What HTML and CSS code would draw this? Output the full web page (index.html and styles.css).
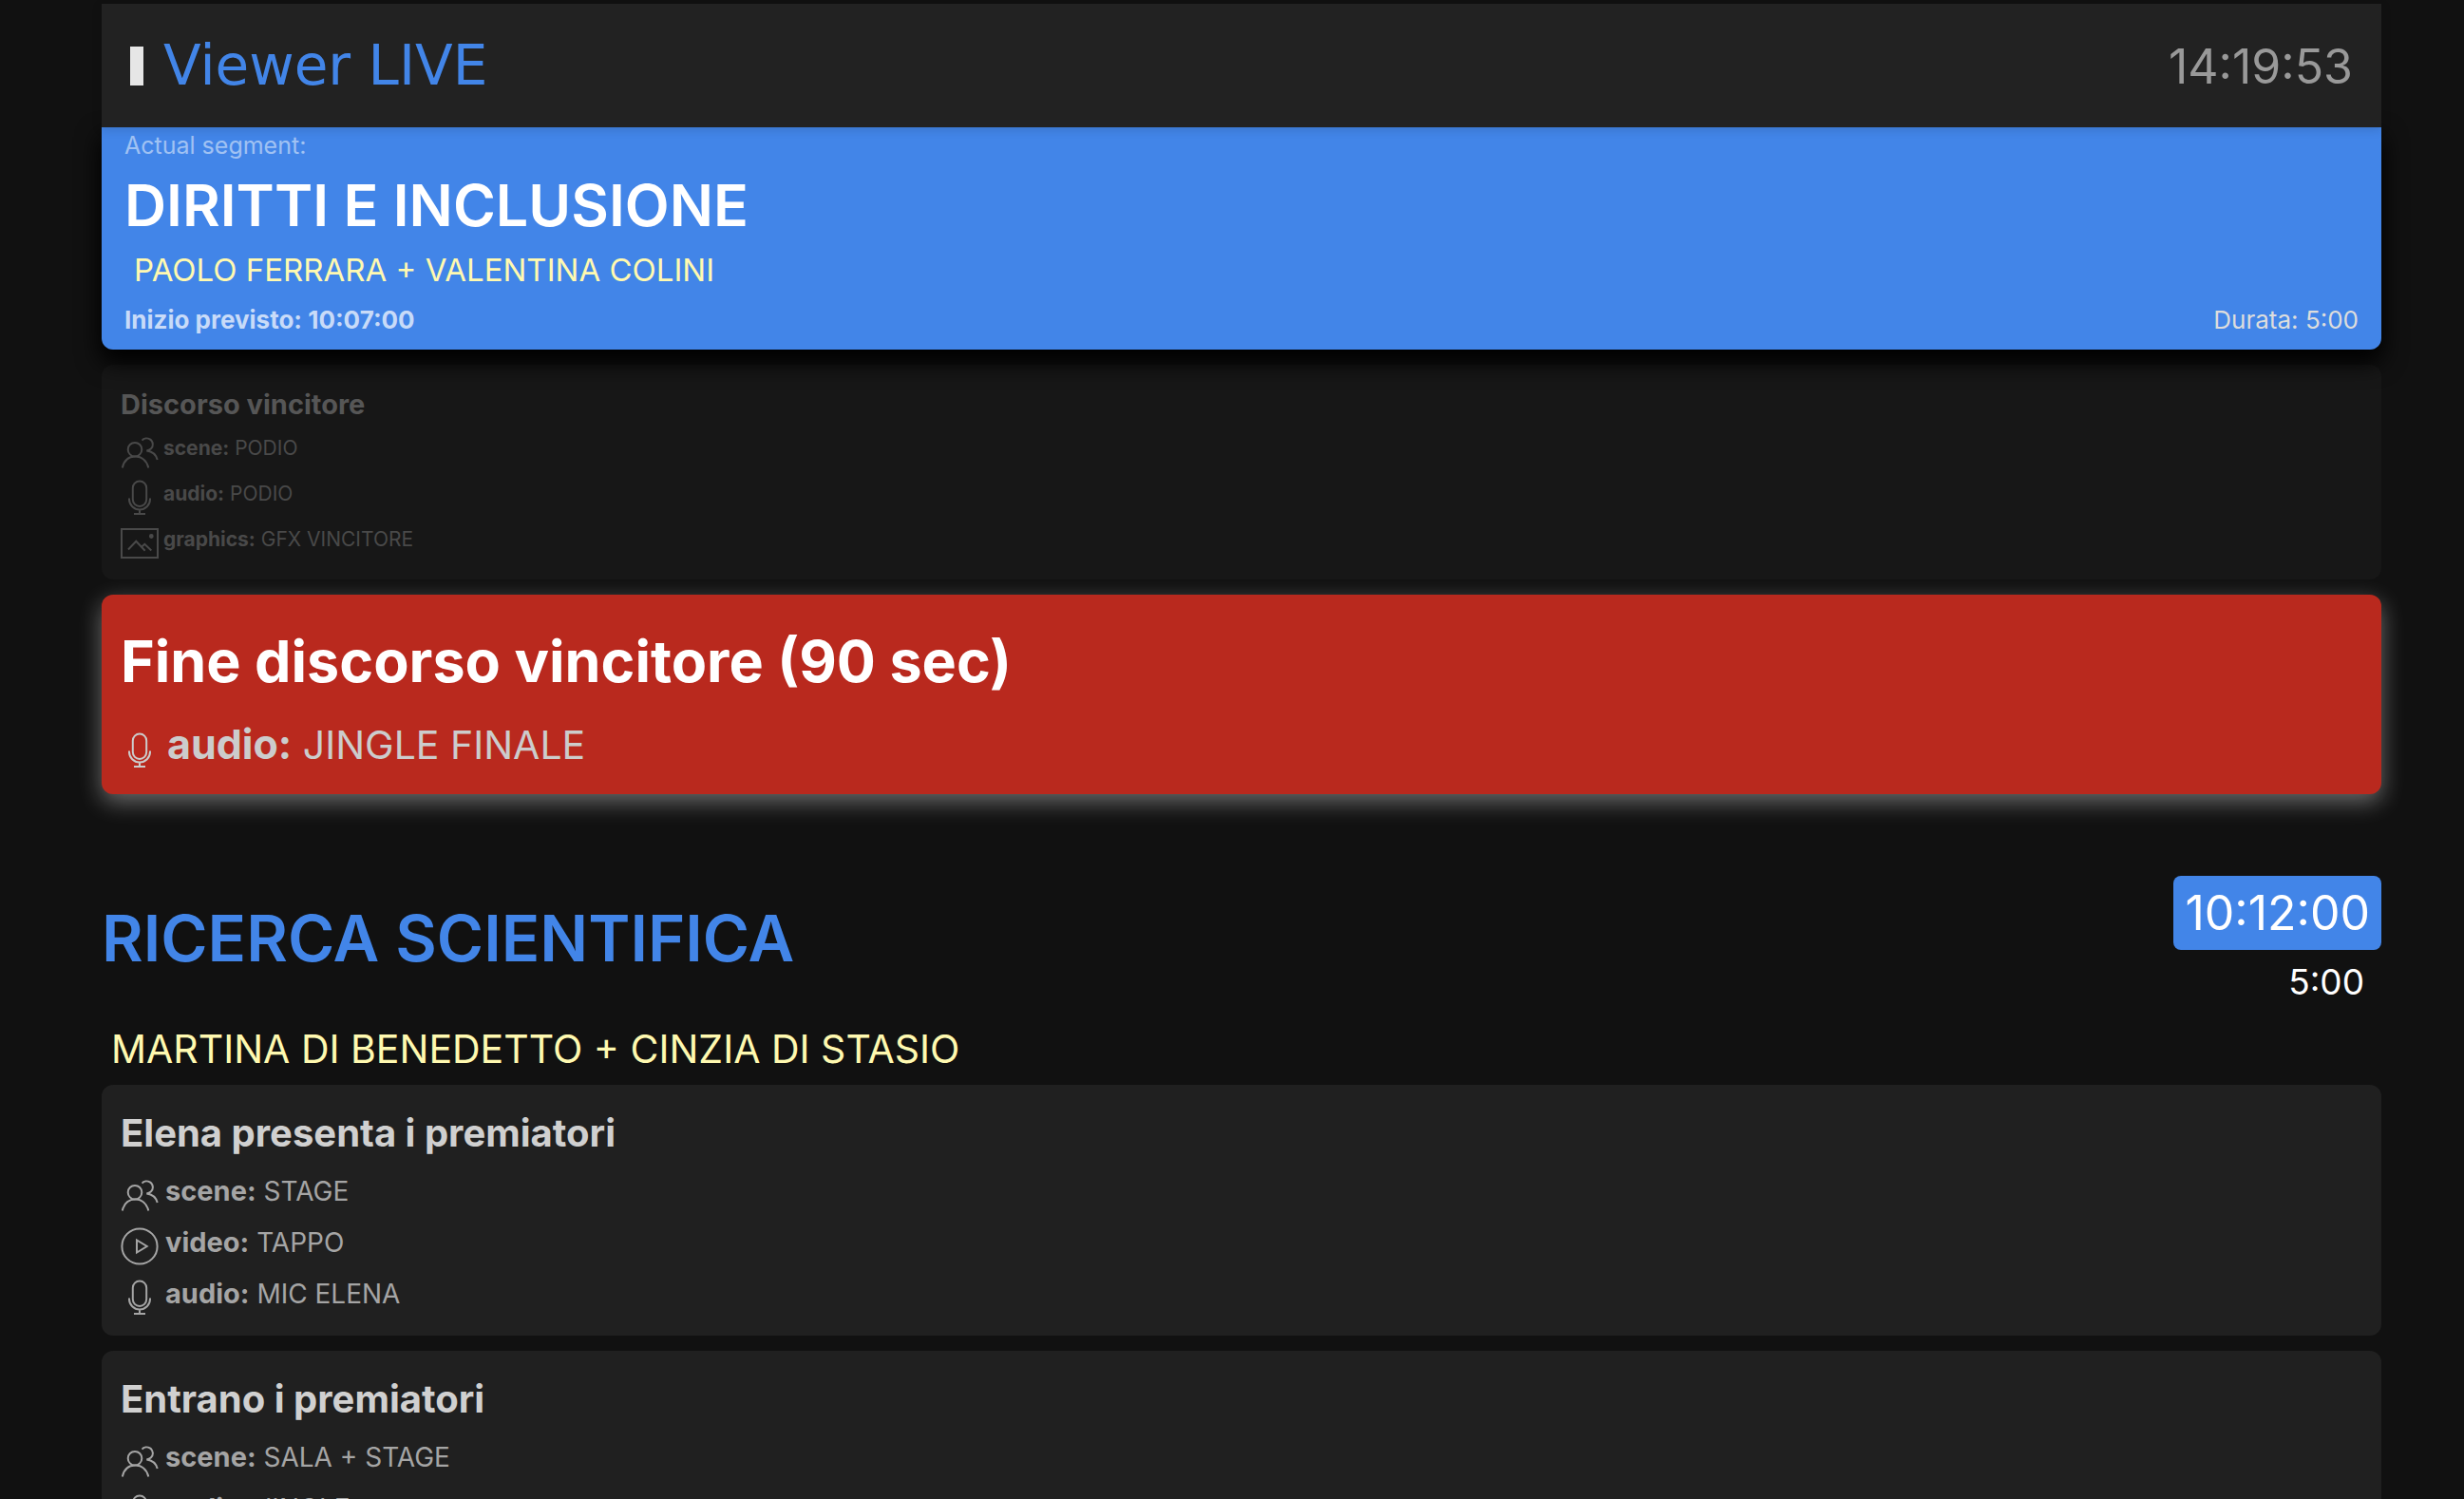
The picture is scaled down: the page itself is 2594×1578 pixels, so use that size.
FILE: index.html
```html
<!DOCTYPE html>
<html lang="it">
<head>
<meta charset="utf-8">
<title>Viewer LIVE</title>
<link rel="stylesheet" href="styles.css">
</head>
<body>
<svg class="sprite" aria-hidden="true">
  <symbol id="scene" viewBox="0 0 40 40">
    <circle cx="15" cy="17.2" r="7.3"/>
    <path d="M1.8 36.5C3.5 29 8.500 24.500 15.400 24.500S27.500 29 29.300 36.500M22.500 7.600C24.500 5.200 28 4.800 30.800 6.400C34.600 8.700 34.800 14 31.800 16.600C30.600 17.700 29.200 18.200 27.300 18.400C33 19 37.300 22.500 38.700 28"/>
  </symbol>
  <symbol id="video" viewBox="0 0 40 40">
    <circle cx="20" cy="20" r="18.6"/>
    <path d="M17 13.500V26.500L27.700 20Z"/>
  </symbol>
  <symbol id="audio" viewBox="0 0 40 40">
    <rect x="12.800" y="2.500" width="14.400" height="26.500" rx="7.200"/>
    <path d="M9 20.500V21.500A11 11 0 0 0 31 21.500V20.500M20 32.500V37M14 37H26"/>
  </symbol>
  <symbol id="graphics" viewBox="0 0 40 40">
    <rect x="1" y="5" width="38" height="30"/>
    <path d="M8 26.500L16.300 17.800L25.700 27.700M22.300 23.600L25.300 20.800L32.300 27.500"/>
    <circle class="dot" cx="32.300" cy="12.500" r="1.400"/>
  </symbol>
</svg>

<div class="viewer">
  <header class="topbar">
    <h1 class="brand">Viewer LIVE</h1>
    <time class="clock">14:19:53</time>
  </header>

  <section class="current">
    <p class="current-label">Actual segment:</p>
    <h2 class="current-title">DIRITTI E INCLUSIONE</h2>
    <p class="current-people">PAOLO FERRARA + VALENTINA COLINI</p>
    <div class="current-foot">
      <strong class="current-start">Inizio previsto: 10:07:00</strong>
      <span>Durata: 5:00</span>
    </div>
  </section>

  <main>
    <article class="card card-past">
      <h3 class="card-title">Discorso vincitore</h3>
      <ul class="cues">
        <li class="cue"><svg class="icon"><use href="#scene"/></svg><span><b>scene:</b> PODIO</span></li>
        <li class="cue"><svg class="icon"><use href="#audio"/></svg><span><b>audio:</b> PODIO</span></li>
        <li class="cue"><svg class="icon"><use href="#graphics"/></svg><span><b>graphics:</b> GFX VINCITORE</span></li>
      </ul>
    </article>

    <article class="card card-live">
      <h3 class="card-title">Fine discorso vincitore (90 sec)</h3>
      <ul class="cues">
        <li class="cue"><svg class="icon"><use href="#audio"/></svg><span><b>audio:</b> JINGLE FINALE</span></li>
      </ul>
    </article>

    <section class="segment">
      <header class="segment-head">
        <h2 class="segment-title">RICERCA SCIENTIFICA</h2>
        <div class="segment-times">
          <time class="segment-start">10:12:00</time>
          <span class="segment-length">5:00</span>
        </div>
      </header>
      <p class="segment-people">MARTINA DI BENEDETTO + CINZIA DI STASIO</p>

      <article class="card">
        <h3 class="card-title">Elena presenta i premiatori</h3>
        <ul class="cues">
          <li class="cue"><svg class="icon"><use href="#scene"/></svg><span><b>scene:</b> STAGE</span></li>
          <li class="cue"><svg class="icon"><use href="#video"/></svg><span><b>video:</b> TAPPO</span></li>
          <li class="cue"><svg class="icon"><use href="#audio"/></svg><span><b>audio:</b> MIC ELENA</span></li>
        </ul>
      </article>

      <article class="card">
        <h3 class="card-title">Entrano i premiatori</h3>
        <ul class="cues">
          <li class="cue"><svg class="icon"><use href="#scene"/></svg><span><b>scene:</b> SALA + STAGE</span></li>
          <li class="cue"><svg class="icon"><use href="#audio"/></svg><span><b>audio:</b> JINGLE</span></li>
        </ul>
      </article>
    </section>
  </main>
</div>
</body>
</html>
```

FILE: styles.css
```css
* {
  box-sizing: border-box;
  margin: 0;
  padding: 0;
}

html {
  scrollbar-width: none;
}

body {
  padding-left: 20px;
  background: #111;
  color: #fff;
  font-family: "Inter", sans-serif;
}

.sprite {
  display: none;
}

.viewer {
  max-width: 2400px;
  margin: 0 auto;
  padding-top: 4px;
}

/* Header bar */
.topbar {
  position: sticky;
  top: 0;
  z-index: 3;
  display: flex;
  align-items: center;
  justify-content: space-between;
  height: 130px;
  padding: 0 30px;
  background: #222;
  box-shadow: 0 2px 10px rgba(0, 0, 0, 0.15);
}

.brand {
  display: flex;
  align-items: center;
  gap: 21px;
  color: #4285e8;
  font: 400 58px/124px "DejaVu Sans", sans-serif;
}

.brand::before {
  content: "";
  width: 14px;
  height: 41px;
  background: #e6e6e6;
}

.clock {
  padding-top: 2px;
  color: #999;
  font-size: 50px;
}

/* Running segment */
.current {
  position: relative;
  z-index: 2;
  padding: 0 24px 2px;
  border-radius: 0 0 12px 12px;
  background: #4285e8;
  box-shadow: 0 12px 24px 2px #000;
}

.current-label {
  color: rgba(255, 255, 255, 0.5);
  font-size: 25px;
  line-height: 38px;
}

.current-title {
  font-size: 61px;
  font-weight: 600;
  line-height: 88px;
}

.current-people {
  padding-left: 10px;
  color: #fff9b0;
  font-size: 33px;
  line-height: 48px;
}

.current-foot {
  display: flex;
  justify-content: space-between;
  color: #ddd;
  font-size: 26px;
  line-height: 58px;
}

.current-start {
  color: #c8dbf8;
}

/* Cards */
.card {
  margin-bottom: 16px;
  padding: 20px;
  border-radius: 12px;
  background: #202020;
}

.card-title {
  color: #d0d0d0;
  font-size: 40px;
  font-weight: 700;
  line-height: 62px;
}

.cues {
  list-style: none;
}

.cue {
  display: flex;
  align-items: flex-end;
  gap: 7px;
  height: 54px;
  color: #a5a5a5;
  font-size: 28px;
  line-height: 48px;
}

.cue b {
  font-size: 29px;
}

.icon {
  flex: none;
  width: 40px;
  height: 40px;
  fill: none;
  stroke: currentColor;
  stroke-width: 2;
}

.dot {
  fill: currentColor;
}

.card-past {
  margin-top: 16px;
  background: #171717;
}

.card-past .card-title {
  color: #565656;
  font-size: 29px;
  line-height: 44px;
}

.card-past .cues {
  margin-bottom: -2px;
}

.card-past .cue,
.card-past .cue b {
  gap: 5px;
  height: 48px;
  color: #494949;
  font-size: 21px;
}

.card-live {
  margin-bottom: 0;
  padding-bottom: 26px;
  background: #b9291e;
  box-shadow: 0 8px 24px rgba(255, 255, 255, 0.38);
}

.card-live .card-title {
  color: #fff;
  font-size: 61px;
  line-height: 100px;
}

.card-live .cue {
  gap: 9px;
  height: 64px;
  color: #ccc;
  font-size: 41px;
  line-height: 52px;
}

.card-live .cue b {
  font-size: 43px;
}

/* Next segment */
.segment {
  margin-top: 86px;
}

.segment-head {
  display: flex;
  align-items: flex-start;
  justify-content: space-between;
}

.segment-title {
  color: #4285e8;
  font-size: 67px;
  font-weight: 600;
  line-height: 132px;
}

.segment-times {
  display: flex;
  flex-direction: column;
  align-items: flex-end;
  gap: 8px;
}

.segment-start {
  padding: 0 12px;
  border-radius: 8px;
  background: #4285e8;
  font-size: 50px;
  line-height: 78px;
}

.segment-length {
  padding-right: 18px;
  font-size: 37px;
  line-height: 52px;
}

.segment-people {
  padding: 6px 0 0 10px;
  color: #fff9b0;
  font-size: 41px;
  line-height: 76px;
}
```
